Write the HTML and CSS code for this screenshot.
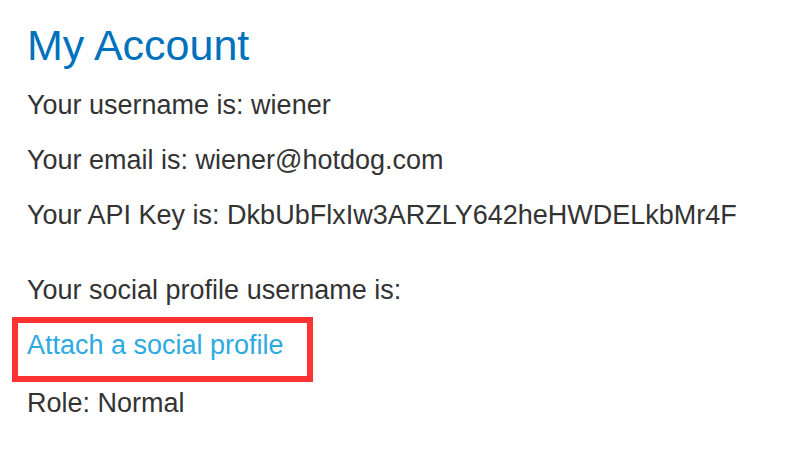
FILE: index.html
```html
<!DOCTYPE html>
<html>
<head>
<meta charset="utf-8">
<link rel="stylesheet" href="styles.css">
</head>
<body>
<div class="page">
  <h1 class="title">My Account</h1>
  <p class="line">Your username is: wiener</p>
  <p class="line">Your email is: wiener@hotdog.com</p>
  <p class="line">Your API Key is: DkbUbFlxIw3ARZLY642heHWDELkbMr4F</p>
  <p class="line social">Your social profile username is:</p>
  <div class="highlight"><a class="link" href="#">Attach a social profile</a></div>
  <p class="line">Role: Normal</p>
</div>
</body>
</html>
```
FILE: styles.css
```css
html, body {
  margin: 0;
  padding: 0;
  background: #ffffff;
}
body {
  font-family: "Liberation Sans", Arial, sans-serif;
  color: #333333;
}
.page {
  padding: 20px 0 0 27px;
  display: flex;
  flex-direction: column;
  align-items: flex-start;
}
.title {
  margin: 0 0 8px 0;
  font-size: 43px;
  font-weight: normal;
  line-height: 50px;
  color: #0071bc;
}
.line {
  margin: 0;
  font-size: 27px;
  line-height: 55px;
}
.social {
  margin-top: 20px;
}
.highlight {
  position: relative;
  line-height: 55px;
}
.highlight::after {
  content: "";
  position: absolute;
  left: -15px;
  right: -29px;
  top: -1px;
  bottom: -6px;
  border: 6px solid #ff3333;
  pointer-events: none;
}
.link {
  font-size: 27px;
  color: #2eaae2;
  text-decoration: none;
}
```
